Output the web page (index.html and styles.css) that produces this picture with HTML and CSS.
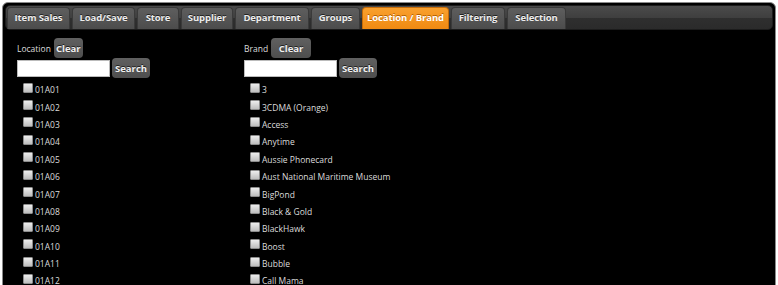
FILE: index.html
```html
<!DOCTYPE html>
<html>
<head>
<meta charset="utf-8">
<link rel="stylesheet" href="styles.css">
</head>
<body>
<div class="panel">
  <div class="tabbar">
    <div class="tab w-item">Item Sales</div>
    <div class="tab w-load">Load/Save</div>
    <div class="tab w-store">Store</div>
    <div class="tab w-supp">Supplier</div>
    <div class="tab w-dept">Department</div>
    <div class="tab w-groups">Groups</div>
    <div class="tab w-loc active">Location / Brand</div>
    <div class="tab w-filt">Filtering</div>
    <div class="tab w-sel">Selection</div>
  </div>
  <div class="content">
    <div class="col">
      <div class="head"><span class="label">Location</span><button class="btn clear-l">Clear</button></div>
      <div class="search"><input class="field" type="text"><button class="btn search-btn">Search</button></div>
      <ul class="list">
        <li><span class="cb"></span>01A01</li>
        <li><span class="cb"></span>01A02</li>
        <li><span class="cb"></span>01A03</li>
        <li><span class="cb"></span>01A04</li>
        <li><span class="cb"></span>01A05</li>
        <li><span class="cb"></span>01A06</li>
        <li><span class="cb"></span>01A07</li>
        <li><span class="cb"></span>01A08</li>
        <li><span class="cb"></span>01A09</li>
        <li><span class="cb"></span>01A10</li>
        <li><span class="cb"></span>01A11</li>
        <li><span class="cb"></span>01A12</li>
      </ul>
    </div>
    <div class="col">
      <div class="head"><span class="label">Brand</span><button class="btn clear-r">Clear</button></div>
      <div class="search"><input class="field" type="text"><button class="btn search-btn">Search</button></div>
      <ul class="list">
        <li><span class="cb"></span>3</li>
        <li><span class="cb"></span>3CDMA (Orange)</li>
        <li><span class="cb"></span>Access</li>
        <li><span class="cb"></span>Anytime</li>
        <li><span class="cb"></span>Aussie Phonecard</li>
        <li><span class="cb"></span>Aust National Maritime Museum</li>
        <li><span class="cb"></span>BigPond</li>
        <li><span class="cb"></span>Black &amp; Gold</li>
        <li><span class="cb"></span>BlackHawk</li>
        <li><span class="cb"></span>Boost</li>
        <li><span class="cb"></span>Bubble</li>
        <li><span class="cb"></span>Call Mama</li>
      </ul>
    </div>
  </div>
</div>
</body>
</html>
```

FILE: styles.css
```css
html, body {
  margin: 0;
  padding: 0;
  background: #fff;
  overflow: hidden;
}
body {
  padding: 2px 0 0 2px;
  font-family: "Open Sans", "DejaVu Sans", sans-serif;
}
.panel {
  width: 774px;
  height: 320px;
  background: #000;
  border: 1px solid #8a8a8a;
  border-radius: 6px;
  box-sizing: border-box;
  padding: 2px 2px 0 2px;
}
.tabbar {
  height: 25px;
  box-sizing: border-box;
  border-radius: 5px;
  background: linear-gradient(#4b4b4b 0%, #3f3f3f 50%, #2f2f2f 51%, #2b2b2b 100%);
  border: 1px solid #1c1c1c;
  display: flex;
  align-items: flex-end;
  padding-left: 1px;
  gap: 2px;
}
.tab {
  height: 22px;
  box-sizing: border-box;
  border-radius: 4px 4px 0 0;
  background: linear-gradient(#5e5e5e, #4c4c4c);
  border: 1px solid #3a3a3a;
  border-bottom: none;
  color: #ececec;
  font-weight: bold;
  font-size: 9.5px;
  letter-spacing: -0.1px;
  text-align: center;
  line-height: 20px;
  text-shadow: 0 -1px 0 #222;
  white-space: nowrap;
}
.tab.active {
  background: linear-gradient(#f9a02e, #f08a12);
  border-color: #c56b08;
  color: #fff;
  text-shadow: 0 -1px 0 #b35f00;
}
.w-item { width: 63px; }
.w-load { width: 63px; }
.w-store { width: 42px; }
.w-supp { width: 52px; }
.w-dept { width: 74px; }
.w-groups { width: 49px; }
.w-loc { width: 87px; }
.w-filt { width: 54px; }
.w-sel { width: 59px; }

.content {
  display: grid;
  grid-template-columns: 227px 227px;
  padding: 8px 0 0 12px;
}
.head {
  display: flex;
  align-items: center;
  height: 20px;
  gap: 3px;
}
.label {
  color: #dcdcdc;
  font-size: 8.5px;
}
.btn {
  height: 20px;
  border: none;
  border-radius: 4px;
  background: linear-gradient(#606060, #4e4e4e);
  color: #f0f0f0;
  font-family: "Open Sans", "DejaVu Sans", sans-serif;
  font-weight: bold;
  font-size: 9.5px;
  padding: 0;
  margin: 0;
  text-shadow: 0 -1px 0 #222;
}
.clear-l { width: 29px; }
.clear-r { width: 40px; }
.search {
  display: flex;
  align-items: center;
  gap: 2px;
  margin-top: 0;
  height: 20px;
}
.field {
  width: 93px;
  height: 17px;
  box-sizing: border-box;
  border: 1px solid #bbb;
  background: #fff;
  padding: 0;
  margin: 0;
}
.search-btn { width: 38px; }
.list {
  list-style: none;
  margin: 3px 0 0 0;
  padding: 0 0 0 6px;
}
.list li {
  height: 17.4px;
  display: flex;
  align-items: center;
  color: #dcdcdc;
  font-size: 8.5px;
}
.cb {
  width: 8px;
  height: 8px;
  border: 1px solid #8c8c8c;
  background: linear-gradient(#ededed, #bdbdbd);
  margin-right: 2px;
  border-radius: 1px;
  flex: none;
  position: relative;
  top: -2px;
}
```
